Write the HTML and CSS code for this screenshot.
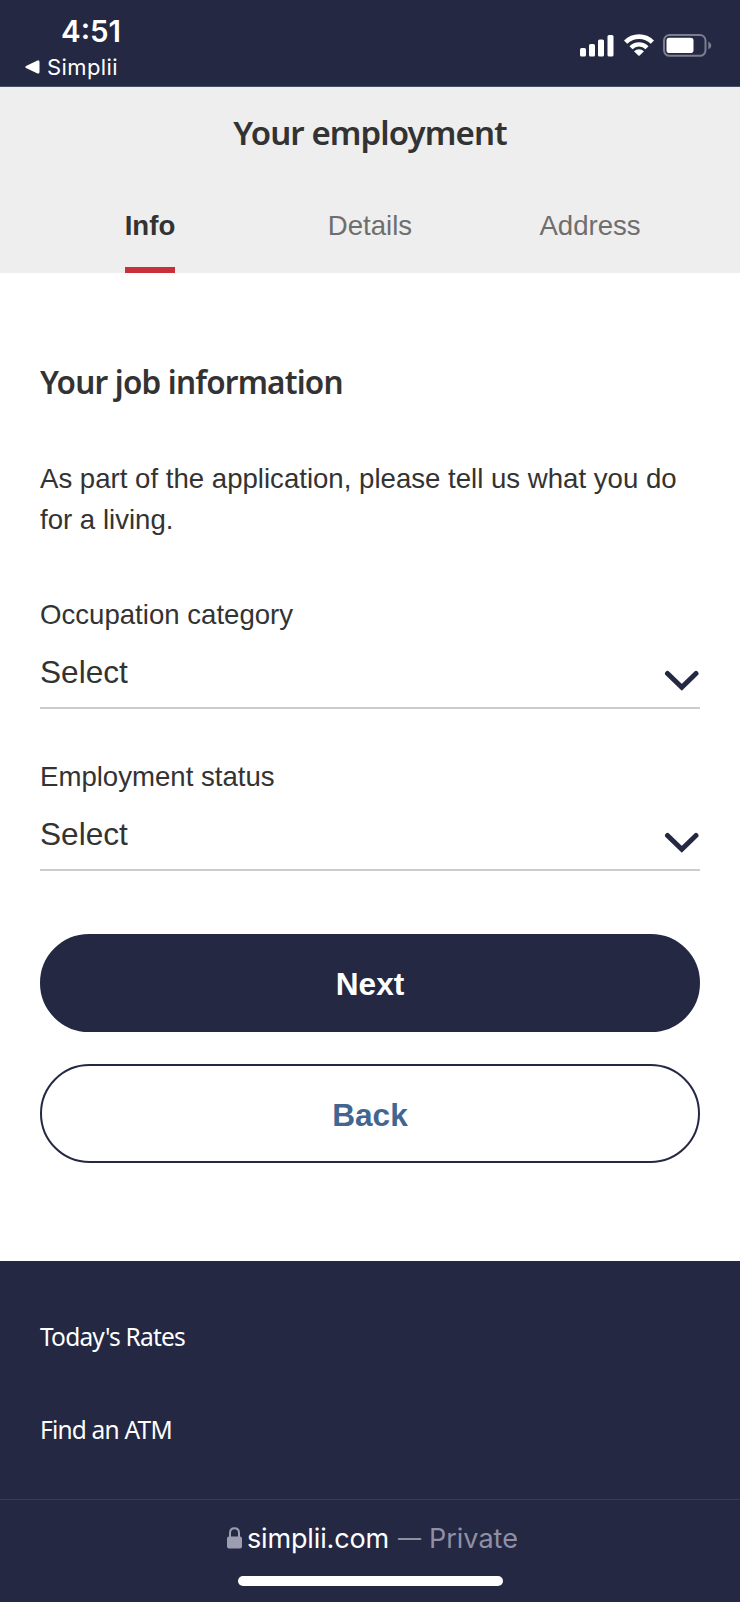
FILE: index.html
```html
<!DOCTYPE html>
<html lang="en">
  <head>
    <meta charset="UTF-8" />
    <meta name="viewport" content="width=device-width, initial-scale=1.0" />
    <title>Your employment</title>
    <link rel="stylesheet" href="styles.css">
  </head>
  <body>
    <!-- Status bar -->
    <div class="status-bar">
      <div class="status-left">
        <div class="time">4:51</div>
        <div class="back-app">
          <svg width="15" height="14" viewBox="0 0 15 14"><path d="M1 6 L12.5 .4 Q14.500 0 14.500 2 V12 Q14.500 14 12.500 13.500 L1 8 Q-.4 7 1 6Z" fill="#fff" /></svg>
          <span>Simplii</span>
        </div>
      </div>
      <div class="status-icons">
        <svg class="signal" width="34" height="22" viewBox="0 0 34 22" fill="#fff">
          <rect x="0" y="13" width="6" height="8.500" rx="1.600" />
          <rect x="9" y="9" width="6" height="12.500" rx="1.600" />
          <rect x="18" y="4.500" width="6" height="17" rx="1.600" />
          <rect x="27.500" y="0" width="6" height="21.500" rx="1.600" />
        </svg>
        <svg class="wifi" width="30" height="22" viewBox="0 0 30 22" fill="none" stroke="#fff">
          <path d="M1.600 8.200 A19 19 0 0 1 28.400 8.200" stroke-width="4.600" />
          <path d="M7 13.700 A11.400 11.400 0 0 1 23 13.700" stroke-width="4.400" />
          <path d="M10 17.200 Q15 13.300 20 17.200 L15.700 21.400 Q15 22 14.300 21.400Z" fill="#fff" stroke="none" />
        </svg>
        <svg class="battery" width="49" height="23" viewBox="0 0 49 23">
          <rect x="1" y="1" width="41.500" height="20.800" rx="5.500" fill="none" stroke="#7c7e90" stroke-width="2" />
          <rect x="3.500" y="3.700" width="27" height="15.300" rx="2.800" fill="#fff" />
          <path d="M45.300 7.500 Q48.300 9 48.300 11.400 Q48.300 14 45.300 15.300Z" fill="#7c7e90" />
        </svg>
      </div>
    </div>

    <!-- Header -->
    <header class="header">
      <h1>Your employment</h1>
      <nav class="tabs">
        <a class="tab active">Info</a>
        <a class="tab">Details</a>
        <a class="tab">Address</a>
      </nav>
    </header>

    <!-- Main Content -->
    <main class="main">
      <h2>Your job information</h2>
      <p class="intro">As part of the application, please tell us what you do for a living.</p>

      <div class="field">
        <div class="label">Occupation category</div>
        <div class="select">
          <span>Select</span>
          <svg class="chevron" width="36" height="22" viewBox="0 0 36 22"><path d="M3.500 3.500 L17.800 17.200 L32 3.500" /></svg>
        </div>
      </div>
      <div class="field">
        <div class="label">Employment status</div>
        <div class="select">
          <span>Select</span>
          <svg class="chevron" width="36" height="22" viewBox="0 0 36 22"><path d="M3.500 3.500 L17.800 17.200 L32 3.500" /></svg>
        </div>
      </div>

      <div class="actions">
        <button class="btn btn-primary">Next</button>
        <button class="btn btn-secondary">Back</button>
      </div>
    </main>

    <!-- Footer -->
    <footer class="footer">
      <a>Today's Rates</a>
      <a>Find an ATM</a>
    </footer>

    <!-- Browser bar -->
    <div class="browser-bar">
      <div class="address">
        <svg width="15" height="22" viewBox="0 0 15 22">
          <path d="M3 11 V6 Q3 1.200 7.500 1.200 Q12 1.200 12 6 V11" fill="none" stroke="#9c9db1" stroke-width="2" />
          <rect x="0" y="9.500" width="15" height="12" rx="2" fill="#9c9db1" />
        </svg>
        <span class="domain">simplii.com</span>
        <span class="dash">—</span>
        <span class="private">Private</span>
      </div>
      <div class="home-indicator"></div>
    </div>
  </body>
</html>
```

FILE: styles.css
```css
* {
  box-sizing: border-box;
}
body {
  margin: 0;
  height: 1602px;
  overflow: hidden;
  display: flex;
  flex-direction: column;
  font-family: "Liberation Sans", Arial, sans-serif;
  color: #333;
  background-color: #fff;
}
svg {
  display: block;
  flex-shrink: 0;
}
h1,
h2,
p {
  margin: 0;
}

/* Status bar */
.status-bar {
  height: 87px;
  flex-shrink: 0;
  display: flex;
  justify-content: space-between;
  background-color: #242843;
  border-bottom: 1px solid #4b4e62;
  color: #fff;
  font-family: Inter, sans-serif;
  padding: 0 28px 0 25px;
}
.time {
  font-size: 29.5px;
  font-weight: 600;
  line-height: 36px;
  padding: 13px 0 0 36px;
}
.back-app {
  display: flex;
  align-items: center;
  gap: 7px;
  font-size: 22px;
  letter-spacing: 0.4px;
  line-height: 30px;
  margin-top: 3px;
}
.status-icons {
  display: flex;
  padding-top: 34px;
}
.signal {
  margin: 1px 10px 0 0;
}
.wifi {
  margin-right: 9px;
}

/* Header */
.header {
  height: 186px;
  flex-shrink: 0;
  background-color: #eee;
  padding: 21px 40px 0;
}
.header h1 {
  font-family: "Noto Sans", sans-serif;
  font-size: 33px;
  font-weight: 600;
  letter-spacing: -0.9px;
  line-height: 50px;
  text-align: center;
  margin-bottom: 48px;
}
.tabs {
  display: grid;
  grid-template-columns: repeat(3, 1fr);
  justify-items: center;
}
.tab {
  height: 67px;
  font-size: 27.6px;
  line-height: 40px;
  color: #6e6e6e;
}
.tab.active {
  color: #333;
  font-weight: bold;
  border-bottom: 6px solid #c8313a;
}

/* Main */
.main {
  height: 988px;
  flex-shrink: 0;
  padding: 89px 40px 0;
}
.main h2 {
  font-family: "Noto Sans", sans-serif;
  font-size: 31.5px;
  font-weight: 600;
  letter-spacing: -0.8px;
  line-height: 40px;
  margin-bottom: 56px;
}
.intro {
  font-size: 27.6px;
  line-height: 41.4px;
  margin-bottom: 54px;
}
.field {
  margin-bottom: 48px;
}
.label {
  font-size: 27.6px;
  line-height: 40px;
  margin-bottom: 17px;
}
.select {
  display: flex;
  justify-content: space-between;
  height: 57px;
  font-size: 31.6px;
  line-height: 40px;
  border-bottom: 2px solid #ccc;
}
.chevron {
  margin-top: 18px;
}
.chevron path {
  fill: none;
  stroke: #242843;
  stroke-width: 5;
  stroke-linecap: round;
}
.actions {
  display: flex;
  flex-direction: column;
  gap: 32px;
  padding-top: 15px;
}
.btn {
  height: 98.5px;
  border: 2px solid #242843;
  border-radius: 50px;
  padding: 3px 0 0;
  font-family: inherit;
  font-size: 31.6px;
  font-weight: bold;
}
.btn-primary {
  background-color: #242843;
  color: #fff;
}
.btn-secondary {
  background-color: #fff;
  color: #43658f;
}

/* Footer */
.footer {
  height: 238px;
  flex-shrink: 0;
  display: flex;
  flex-direction: column;
  gap: 53px;
  padding: 56px 40px 0;
  background-color: #242843;
  color: #fff;
  font-family: "Noto Sans", sans-serif;
  font-size: 24.5px;
  letter-spacing: -0.8px;
  line-height: 40px;
}

/* Browser bar */
.browser-bar {
  height: 103px;
  flex-shrink: 0;
  background-color: #242843;
  border-top: 1px solid #393c54;
  font-family: Inter, sans-serif;
}
.address {
  display: flex;
  align-items: center;
  height: 40px;
  margin: 18px 0 18px 227px;
  font-size: 27px;
  color: #8f90a6;
}
.domain {
  color: #fff;
  letter-spacing: -0.15px;
  margin: 0 9px 0 5px;
}
.dash {
  font-size: 23px;
  margin-right: 8px;
}
.home-indicator {
  width: 265px;
  height: 10px;
  margin-left: 238px;
  border-radius: 5px;
  background-color: #fff;
}
```
